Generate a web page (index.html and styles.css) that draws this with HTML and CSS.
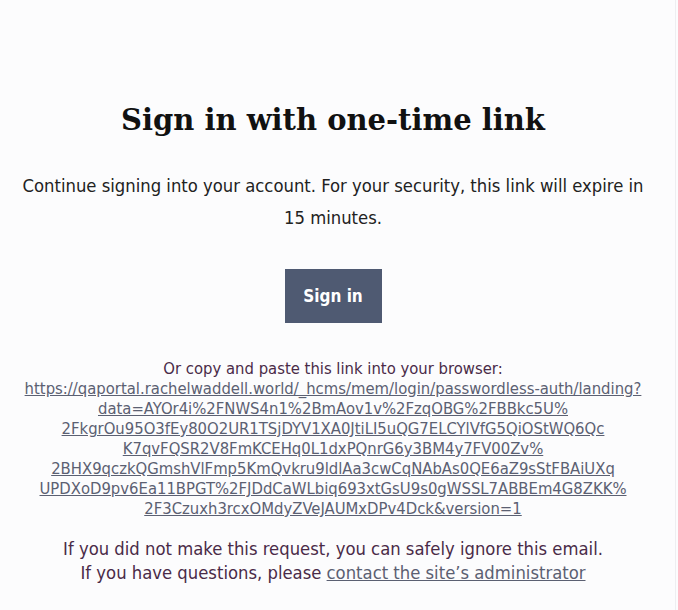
FILE: index.html
```html
<!DOCTYPE html>
<html>
<head>
<meta charset="utf-8">
<title>Sign in with one-time link</title>
<link rel="stylesheet" href="styles.css">
</head>
<body>

<div class="page">

  <h1 class="title">Sign in with one-time link</h1>

  <p class="intro">
    Continue signing into your account. For your security, this link will expire in
    15 minutes.
  </p>

  <div class="action">
    <a class="button" href="#">Sign in</a>
  </div>

  <p class="copy">
    Or copy and paste this link into your browser:<br>
    <a class="longlink" href="#">https://qaportal.rachelwaddell.world/_hcms/mem/login/passwordless-auth/landing?<br>data=AYOr4i%2FNWS4n1%2BmAov1v%2FzqOBG%2FBBkc5U%<br>2FkgrOu95O3fEy80O2UR1TSjDYV1XA0JtiLI5uQG7ELCYlVfG5QiOStWQ6Qc<br>K7qvFQSR2V8FmKCEHq0L1dxPQnrG6y3BM4y7FV00Zv%<br>2BHX9qczkQGmshVlFmp5KmQvkru9ldlAa3cwCqNAbAs0QE6aZ9sStFBAiUXq<br>UPDXoD9pv6Ea11BPGT%2FJDdCaWLbiq693xtGsU9s0gWSSL7ABBEm4G8ZKK%<br>2F3Czuxh3rcxOMdyZVeJAUMxDPv4Dck&amp;version=1</a>
  </p>

  <p class="footer">
    If you did not make this request, you can safely ignore this email.<br>
    If you have questions, please <a href="#">contact the site’s administrator</a>
  </p>

</div>

</body>
</html>
```

FILE: styles.css
```css
BODY { margin: 0; background-color: #FCFCFD; }
.page { width: 666px; min-height: 610px; padding-right: 9px; border-right: 1px solid #EEEEF1; text-align: center; font-family: "DejaVu Sans Condensed", "DejaVu Sans", sans-serif; color: #1A1A1A; }
H1.title { margin: 0; padding-top: 100px; font-family: "DejaVu Serif", Georgia, serif; font-size: 29px; font-weight: bold; line-height: 40px; color: #111111; }
P.intro { margin: 30px 18px 0; font-size: 18.3px; line-height: 32px; color: #222222; }
.action { margin-top: 35px; }
A.button { display: inline-block; width: 97px; height: 54px; line-height: 54px; background-color: #4F5A72; color: #FFFFFF; font-size: 17px; font-weight: bold; text-decoration: none; }
P.copy { margin: 36px 0 0; font-size: 16.5px; line-height: 20px; color: #4A2B48; }
A.longlink { color: #5B6072; }
P.footer { margin: 18px 0 0; font-size: 18.3px; line-height: 24px; color: #4A2B48; }
P.footer A { color: #5B6072; }
```
